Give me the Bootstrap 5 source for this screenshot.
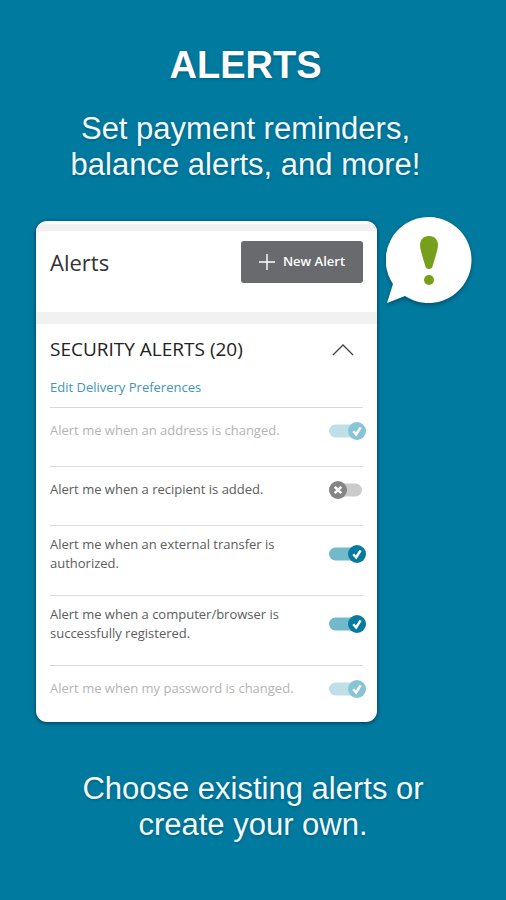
<!DOCTYPE html>
<html lang="en">
<head>
<meta charset="utf-8">
<meta name="viewport" content="width=device-width, initial-scale=1">
<title>Alerts</title>
<link href="https://cdn.jsdelivr.net/npm/bootstrap@5.3.0/dist/css/bootstrap.min.css" rel="stylesheet">
<style>
body { background: #007a9e; font-family: "Open Sans", "Noto Sans", sans-serif; }
.promo { font-family: "Liberation Sans", Arial, sans-serif; color: #f4fbff; text-shadow: 0 1px 3px rgba(0, 50, 75, .4); }
.promo-top { padding: 41px 15px 0 0; }
.promo-title { font-size: 38px; line-height: 48px; font-weight: 700; margin-bottom: 22px; color: #fff; }
.promo-text { font-size: 31px; line-height: 36px; }
.stage { padding: 34px 34px 0 36px; gap: 9px; }
.panel { margin-top: 4px; background: #fff; border-radius: 11px; box-shadow: 0 1px 4px rgba(0, 30, 50, .7); overflow: hidden; }
.strip-top { height: 7px; margin-top: 3px; background: #f1f1f1; }
.strip { height: 12px; background: #f1f1f1; }
.panel-head { padding: 10px 14px 29px; }
.panel-title { font-size: 22px; line-height: 30px; color: #333; }
.btn-new { --bs-btn-color: #fff; --bs-btn-bg: #696a6d; --bs-btn-hover-color: #fff; --bs-btn-hover-bg: #58595b; --bs-btn-border-radius: 3px; width: 122px; height: 42px; font-size: 13px; font-weight: 600; border: 0; padding: 0; gap: 8px; }
.panel-body { padding: 12px 14px 0; }
.section-title { font-size: 19px; line-height: 26px; font-weight: 500; color: #222; }
.btn-fold { width: 40px; height: 26px; line-height: 0; }
.edit-link { font-size: 13px; line-height: 20px; color: #4296b8; margin: 15px 0 10px; }
.alert-row { border-top: 1px solid #d9d9d9; padding: 13px 0 26px; font-size: 13px; line-height: 19px; color: #5c5c5c; }
.alert-row.tall { padding: 9px 0 22px; }
.alert-row.locked { color: #b4b4b4; }
.alert-row:last-child { padding-bottom: 24px; }
.alert-row label { max-width: 255px; }
.toggle { appearance: none; flex: none; width: 37px; height: 18px; margin: 0 -3px 0 0; background: center / 37px 18px no-repeat url("data:image/svg+xml,%3Csvg xmlns='http://www.w3.org/2000/svg' viewBox='0 0 37 18'%3E%3Crect y='2.5' width='33' height='13' rx='6.5' fill='%23cbcbcb'/%3E%3Ccircle cx='9' cy='9' r='9' fill='%23858585'/%3E%3Cpath d='M5.8 5.8l6.4 6.4M12.2 5.8l-6.4 6.4' stroke='white' stroke-width='2.6'/%3E%3C/svg%3E"); }
.toggle:checked { background-image: url("data:image/svg+xml,%3Csvg xmlns='http://www.w3.org/2000/svg' viewBox='0 0 37 18'%3E%3Crect y='2.5' width='35' height='13' rx='6.5' fill='%2372b9cc'/%3E%3Ccircle cx='28' cy='9' r='9' fill='%23087a9f'/%3E%3Cpath d='M24.3 9.3l2.8 3.2 4.5-7.2' fill='none' stroke='white' stroke-width='2.5'/%3E%3C/svg%3E"); }
.toggle:disabled { opacity: 1; background-image: url("data:image/svg+xml,%3Csvg xmlns='http://www.w3.org/2000/svg' viewBox='0 0 37 18'%3E%3Crect y='2.5' width='35' height='13' rx='6.5' fill='%23bfe0e8'/%3E%3Ccircle cx='28' cy='9' r='9' fill='%2387c5d6'/%3E%3Cpath d='M24.3 9.3l2.8 3.2 4.5-7.2' fill='none' stroke='white' stroke-width='2.5'/%3E%3C/svg%3E"); }
.bubble { filter: drop-shadow(0 2px 2px rgba(0, 40, 60, .5)); }
.promo-bottom { padding: 49px 0 20px; }
</style>
<script src="https://cdn.jsdelivr.net/npm/bootstrap@5.3.0/dist/js/bootstrap.bundle.min.js" defer></script>
</head>
<body>
<header class="promo promo-top text-center">
  <h1 class="promo-title">ALERTS</h1>
  <p class="promo-text mb-0">Set payment reminders,<br>balance alerts, and more!</p>
</header>
<main class="stage d-flex align-items-start">
  <section class="panel flex-grow-1">
    <div class="strip-top"></div>
    <div class="panel-head d-flex justify-content-between align-items-center">
      <h2 class="panel-title fw-normal mb-0">Alerts</h2>
      <button type="button" class="btn btn-new d-flex align-items-center justify-content-center">
        <svg width="16" height="16" viewBox="0 0 16 16" fill="none" stroke="#fff" stroke-width="1.4" aria-hidden="true"><path d="M8 0v16M0 8h16"/></svg>
        New Alert
      </button>
    </div>
    <div class="strip"></div>
    <div class="panel-body">
      <div class="d-flex justify-content-between align-items-center">
        <h3 class="section-title mb-0">SECURITY ALERTS (20)</h3>
        <button type="button" class="btn-fold border-0 bg-transparent p-0" aria-label="Collapse security alerts" data-bs-toggle="collapse" data-bs-target="#security">
          <svg width="22" height="13" viewBox="0 0 22 13" fill="none" stroke="#444" stroke-width="1.3" aria-hidden="true"><path d="M1 12L11 2l10 10"/></svg>
        </button>
      </div>
      <div id="security" class="collapse show">
        <a href="#" class="edit-link d-block text-decoration-none">Edit Delivery Preferences</a>
        <div class="alert-row locked d-flex justify-content-between align-items-center">
          <label for="a1">Alert me when an address is changed.</label>
          <input class="toggle" type="checkbox" role="switch" id="a1" checked disabled>
        </div>
        <div class="alert-row d-flex justify-content-between align-items-center">
          <label for="a2">Alert me when a recipient is added.</label>
          <input class="toggle" type="checkbox" role="switch" id="a2">
        </div>
        <div class="alert-row tall d-flex justify-content-between align-items-center">
          <label for="a3">Alert me when an external transfer is authorized.</label>
          <input class="toggle" type="checkbox" role="switch" id="a3" checked>
        </div>
        <div class="alert-row tall d-flex justify-content-between align-items-center">
          <label for="a4">Alert me when a computer/browser is successfully registered.</label>
          <input class="toggle" type="checkbox" role="switch" id="a4" checked>
        </div>
        <div class="alert-row locked d-flex justify-content-between align-items-center">
          <label for="a5">Alert me when my password is changed.</label>
          <input class="toggle" type="checkbox" role="switch" id="a5" checked disabled>
        </div>
      </div>
    </div>
  </section>
  <svg class="bubble flex-shrink-0" width="86" height="87" viewBox="0 0 86 87" aria-hidden="true">
    <path fill="#fff" d="M43 0a43 43 0 1 1-24 79L1 86 7 67A43 43 0 0 1 43 0z"/>
    <path fill="#76a01c" d="M43 19c6 0 9 4 9 9 0 4-3 13-5 20-.6 3-2 4-4 4s-3.400-1-4-4c-2-7-5-16-5-20 0-5 3-9 9-9z"/>
    <circle cx="43" cy="63" r="5" fill="#76a01c"/>
  </svg>
</main>
<footer class="promo promo-bottom text-center">
  <p class="promo-text mb-0">Choose existing alerts or<br>create your own.</p>
</footer>
</body>
</html>
